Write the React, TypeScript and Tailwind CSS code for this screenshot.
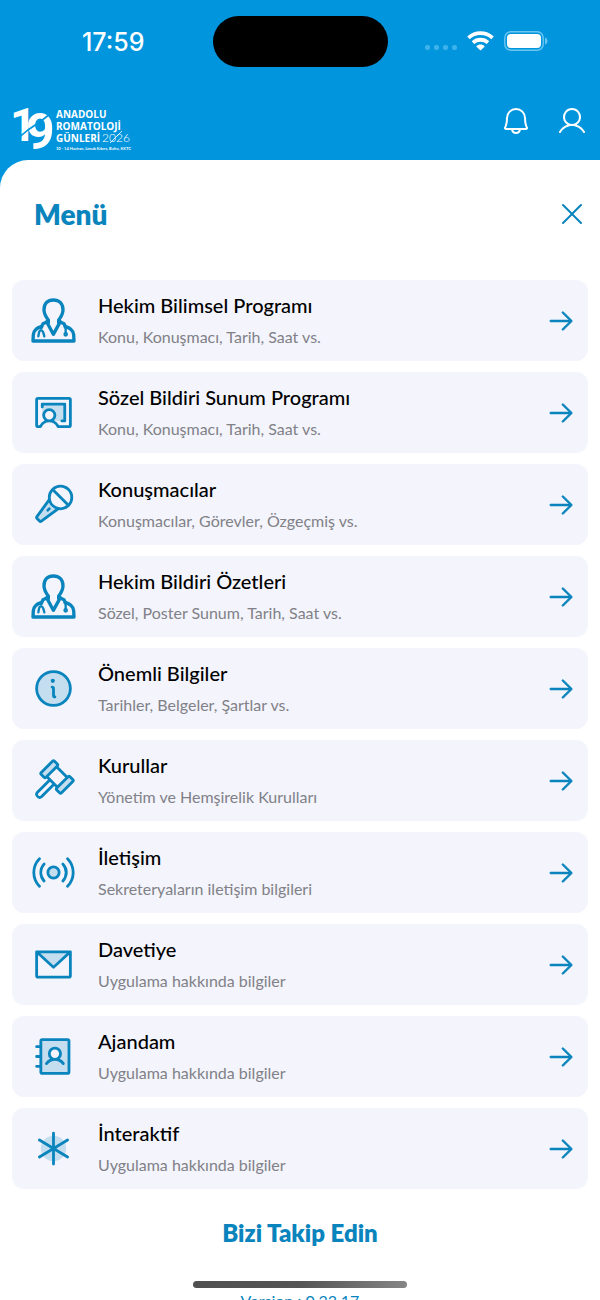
import type { ReactNode } from "react";
import {
  PiAddressBookDuotone,
  PiArrowRight,
  PiAsteriskDuotone,
  PiBell,
  PiBroadcastDuotone,
  PiChalkboardTeacherDuotone,
  PiEnvelopeSimpleDuotone,
  PiGavelDuotone,
  PiInfoDuotone,
  PiMicrophoneStageDuotone,
  PiUser,
  PiX,
} from "react-icons/pi";

interface MenuItem {
  title: string;
  subtitle: string;
  icon: ReactNode;
}

function DoctorIcon() {
  return (
    <svg
      width="45"
      height="45"
      viewBox="0 0 135 135"
      fill="none"
      stroke="currentColor"
      strokeWidth="10"
      strokeLinecap="round"
      strokeLinejoin="round"
      aria-hidden="true"
    >
      <path d="M52 74V66C45 57 39 47 39 35C39 16 50 6 67 6S96 16 96 35C96 47 90 57 83 66V74" />
      <path d="M47 71L67 109L88 71" />
      <path d="M49 71L36 77L30 90M86 71L99 77L104 88" />
      <path d="M32 85C14 90 8 97 7 110L6 129H129L128 110C127 97 120 90 102 85" />
      <path d="M22 115L24 104C26 95 34 95 37 104L40 115" strokeWidth="7" />
      <path d="M104 86V106" strokeWidth="7" />
      <circle cx="104" cy="109" r="3" strokeWidth="8" />
    </svg>
  );
}

const items: MenuItem[] = [
  {
    title: "Hekim Bilimsel Programı",
    subtitle: "Konu, Konuşmacı, Tarih, Saat vs.",
    icon: <DoctorIcon />,
  },
  {
    title: "Sözel Bildiri Sunum Programı",
    subtitle: "Konu, Konuşmacı, Tarih, Saat vs.",
    icon: <PiChalkboardTeacherDuotone size={45} />,
  },
  {
    title: "Konuşmacılar",
    subtitle: "Konuşmacılar, Görevler, Özgeçmiş vs.",
    icon: <PiMicrophoneStageDuotone size={45} />,
  },
  {
    title: "Hekim Bildiri Özetleri",
    subtitle: "Sözel, Poster Sunum, Tarih, Saat vs.",
    icon: <DoctorIcon />,
  },
  {
    title: "Önemli Bilgiler",
    subtitle: "Tarihler, Belgeler, Şartlar vs.",
    icon: <PiInfoDuotone size={45} />,
  },
  {
    title: "Kurullar",
    subtitle: "Yönetim ve Hemşirelik Kurulları",
    icon: <PiGavelDuotone size={45} />,
  },
  {
    title: "İletişim",
    subtitle: "Sekreteryaların iletişim bilgileri",
    icon: <PiBroadcastDuotone size={45} />,
  },
  {
    title: "Davetiye",
    subtitle: "Uygulama hakkında bilgiler",
    icon: <PiEnvelopeSimpleDuotone size={45} />,
  },
  {
    title: "Ajandam",
    subtitle: "Uygulama hakkında bilgiler",
    icon: <PiAddressBookDuotone size={45} />,
  },
  {
    title: "İnteraktif",
    subtitle: "Uygulama hakkında bilgiler",
    icon: <PiAsteriskDuotone size={45} />,
  },
];

function StatusBar() {
  return (
    <div className="flex items-center px-3.5 pt-4">
      <div className="flex-1 text-center font-['Inter',sans-serif] text-[25px] leading-8 font-medium">
        17:59
      </div>
      <div className="h-[51px] w-[175px] rounded-full bg-black" />
      <div className="flex flex-1 items-center justify-center gap-2.5">
        <div className="flex gap-1 pt-3">
          <span className="size-[5px] rounded-xs bg-[#3db3ec]" />
          <span className="size-[5px] rounded-xs bg-[#3db3ec]" />
          <span className="size-[5px] rounded-xs bg-[#3db3ec]" />
          <span className="size-[5px] rounded-xs bg-[#3db3ec]" />
        </div>
        <svg width="27" height="22" viewBox="0 0 27 22" fill="none" stroke="white" strokeWidth="3.8" aria-hidden="true">
          <path d="M1.5 6.8C8.2 0.6 18.8 0.6 25.5 6.8" />
          <path d="M6 11.6C10.2 7.8 16.8 7.8 21 11.6" />
          <path d="M9.2 15.4C11.6 13 15.4 13 17.8 15.4L13.5 19.6Z" fill="white" stroke="none" />
        </svg>
        <svg width="44" height="22" viewBox="0 0 44 22" fill="none" aria-hidden="true">
          <rect x="0.8" y="0.8" width="38.4" height="18.4" rx="6" stroke="#6cc6f2" strokeWidth="1.4" />
          <rect x="3" y="3" width="34" height="14" rx="4" fill="white" />
          <path d="M41 6.5C44.3 7.6 44.3 12.4 41 13.5Z" fill="#6cc6f2" />
        </svg>
      </div>
    </div>
  );
}

function Logo() {
  return (
    <svg
      width="126"
      height="60"
      viewBox="0 -12 126 60"
      fill="white"
      role="img"
      aria-label="19. Anadolu Romatoloji Günleri 2026"
      className="overflow-visible"
    >
      <g className="font-['Roboto',sans-serif]" fontWeight="700">
        <text x="-4" y="38" fontSize="46">1</text>
        <text x="12" y="46" fontSize="50">9</text>
      </g>
      <path d="M2 37L14 27L27 18L40 8" fill="none" stroke="#0195dd" strokeWidth="1.6" />
      <g className="font-['Open_Sans',sans-serif]" fontSize="10" fontWeight="700">
        <text x="42" y="15">ANADOLU</text>
        <text x="42" y="27">ROMATOLOJİ</text>
        <text x="42" y="39">GÜNLERİ</text>
      </g>
      <g className="font-['Lato',sans-serif]">
        <text x="88" y="39" fontSize="12" fontWeight="300">2026</text>
        <text x="42" y="47" fontSize="4" fontWeight="700">10 - 14 Haziran, Limak Kıbrıs, Bafra, KKTC</text>
      </g>
      <path d="M96 40L108 28" stroke="white" strokeWidth="0.8" />
    </svg>
  );
}

function MenuRow({ title, subtitle, icon }: MenuItem) {
  return (
    <li>
      <a
        href="#"
        className="flex h-[81px] items-center rounded-xl bg-[#f3f4fc] pr-3 pl-[19px] text-[#0a84bd]"
      >
        {icon}
        <div className="ml-[22px] flex-1">
          <div className="text-xl leading-6 font-medium text-black">{title}</div>
          <div className="mt-2 text-base leading-6 text-[#818187]">{subtitle}</div>
        </div>
        <PiArrowRight size={30} stroke="currentColor" strokeWidth={5} />
      </a>
    </li>
  );
}

export default function App() {
  return (
    <div className="flex h-screen flex-col overflow-hidden bg-[#0195dd] font-['Lato',sans-serif]">
      <header className="h-40 shrink-0 text-white">
        <StatusBar />
        <div className="flex items-center justify-between pt-6 pr-3 pl-3.5">
          <Logo />
          <div className="flex gap-6">
            <button type="button" aria-label="Bildirimler">
              <PiBell size={32} />
            </button>
            <button type="button" aria-label="Profil">
              <PiUser size={32} />
            </button>
          </div>
        </div>
      </header>

      <main className="relative min-h-0 flex-1 overflow-hidden rounded-tl-[28px] bg-white">
        <div className="flex items-center justify-between pt-9 pr-3 pl-[34px] text-[#0a84bd]">
          <h1 className="text-[28px] leading-9 font-extrabold">Menü</h1>
          <button type="button" aria-label="Kapat">
            <PiX size={32} />
          </button>
        </div>

        <ul className="mt-12 flex flex-col gap-[11px] px-3">
          {items.map((item) => (
            <MenuRow key={item.title} {...item} />
          ))}
        </ul>

        <footer className="pt-7 text-center text-[#0a84bd]">
          <h2 className="text-2xl leading-8 font-extrabold">Bizi Takip Edin</h2>
          <p className="mt-10 text-base leading-6">Version : 0.33.17</p>
        </footer>

        <div className="absolute inset-x-0 bottom-3 mx-auto h-[7px] w-[214px] rounded-full bg-linear-to-r from-[#505050] via-[#555555] to-[#858585]" />
      </main>
    </div>
  );
}
